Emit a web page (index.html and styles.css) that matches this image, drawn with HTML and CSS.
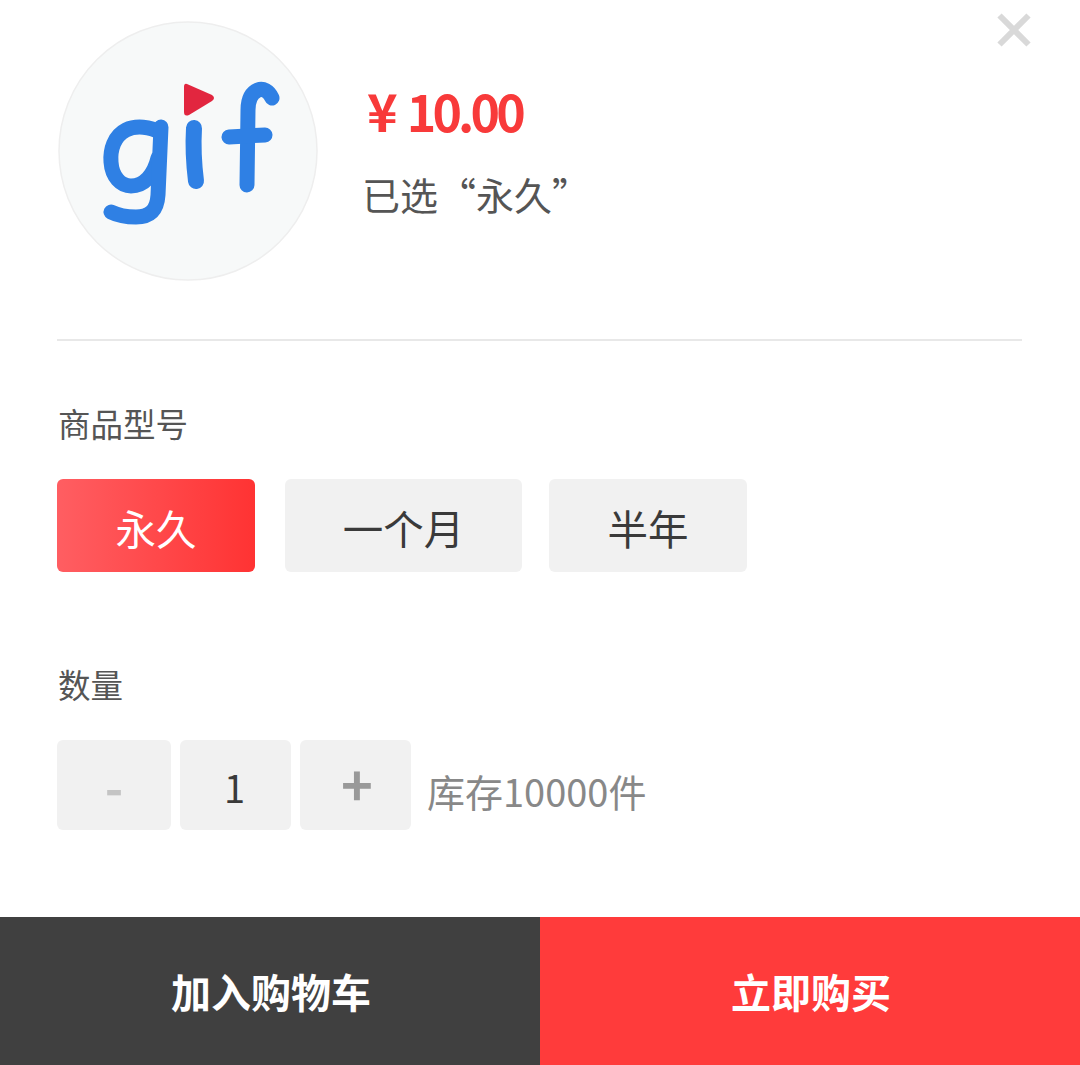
FILE: index.html
```html
<!DOCTYPE html>
<html lang="zh-CN">
<head>
  <meta charset="UTF-8">
  <meta name="viewport" content="width=device-width, initial-scale=1.0">
  <title>商品选择</title>
  <link rel="stylesheet" href="styles.css">
</head>
<body>

  <div class="sheet">
    <svg class="close" viewBox="0 0 34 34" aria-label="关闭">
      <path d="M2.5 2.5L31.5 31.5M31.5 2.5L2.5 31.5"/>
    </svg>

    <div class="summary">
      <svg class="logo" viewBox="56 20 262 262">
        <circle class="logo-disc" cx="187" cy="151" r="129"/>
        <path class="logo-play" d="M186 84L211 95Q215 98 211 101L188 115Q183 117 183 112L183 87Q183 83 186 84Z"/>
        <path class="logo-ink" d="M158 132C150 127 135 125 125 130C113 136 109 150 110 162C111 177 120 186 130 186C143 186 153 175 157 158"/>
        <path class="logo-ink" d="M160 127L157 195C156 211 148 217 135 217C125 217 116 215 110 212"/>
        <path class="logo-ink logo-i" d="M193 128C192 145 193 165 195 181"/>
        <path class="logo-ink" d="M271 98C268 91 262 88 257 90C250 93 247 100 247 110L246 185"/>
        <path class="logo-ink" d="M228 137L264 135"/>
      </svg>
      <div class="summary-text">
        <div class="price"><span class="price-unit">¥</span>10.00</div>
        <div class="picked">已选“永久”</div>
      </div>
    </div>

    <div class="section-model">
      <div class="label">商品型号</div>
      <div class="options">
        <div class="option option-on">永久</div>
        <div class="option option-month">一个月</div>
        <div class="option option-half">半年</div>
      </div>
    </div>

    <div class="section-count">
      <div class="label">数量</div>
      <div class="stepper">
        <div class="step step-minus">-</div>
        <div class="step step-num">1</div>
        <div class="step step-plus">+</div>
        <div class="stock">库存10000件</div>
      </div>
    </div>
  </div>

  <footer class="actions">
    <div class="action action-cart">加入购物车</div>
    <div class="action action-buy">立即购买</div>
  </footer>

</body>
</html>
```

FILE: styles.css
```css
* {
  box-sizing: border-box;
}

body {
  margin: 0;
  height: 1065px;
  display: flex;
  flex-direction: column;
  justify-content: space-between;
  background-color: #fff;
  color: #555;
  font-family: "Noto Sans CJK SC", "Noto Sans", sans-serif;
  overflow: hidden;
}

.sheet {
  position: relative;
  padding: 20px 58px 0 57px;
}

.close {
  position: absolute;
  top: 13px;
  right: 49px;
  width: 34px;
  height: 34px;
}

.close path {
  fill: none;
  stroke: #d9d9d9;
  stroke-width: 6;
}

/* top block */
.summary {
  display: flex;
  align-items: flex-start;
  padding-bottom: 57px;
  border-bottom: 2px solid #e8e8e8;
}

.logo {
  width: 262px;
  height: 262px;
  flex: none;
}

.logo-disc {
  fill: #f7f9f9;
  stroke: #eeeeee;
  stroke-width: 1.5;
}

.logo-play {
  fill: #e2263f;
}

.logo-ink {
  fill: none;
  stroke: #2f80e4;
  stroke-width: 15;
  stroke-linecap: round;
  stroke-linejoin: round;
}

.logo-i {
  stroke-width: 16;
}

.summary-text {
  margin-left: 43px;
  padding-top: 60px;
}

.price {
  margin-left: 5px;
  color: #f83a3a;
  font-size: 50px;
  font-weight: bold;
  line-height: 60px;
  letter-spacing: -3.8px;
}

.price-unit {
  margin-right: 9px;
  font-size: 52px;
  letter-spacing: 0;
}

.picked {
  margin-top: 29px;
  font-size: 38px;
  line-height: 50px;
}

.label {
  padding-left: 1px;
  font-size: 32.5px;
  line-height: 44px;
}

.section-model {
  padding-top: 60px;
}

.options {
  display: flex;
  margin-top: 34px;
}

.option {
  width: 198px;
  height: 93px;
  padding-top: 3px;
  border-radius: 6px;
  background-color: #f1f1f1;
  color: #3a3a3a;
  font-size: 40.5px;
  display: flex;
  align-items: center;
  justify-content: center;
}

.option-on {
  background: linear-gradient(90deg, #ff5e62, #ff3333);
  color: #fff;
}

.option-month {
  width: 237px;
  margin-left: 30px;
}

.option-half {
  margin-left: 27px;
}

.section-count {
  padding-top: 90px;
}

.stepper {
  display: flex;
  align-items: center;
  margin-top: 34px;
}

.step {
  width: 111px;
  height: 90px;
  margin-right: 9px;
  border-radius: 6px;
  background-color: #f1f1f1;
  display: flex;
  align-items: center;
  justify-content: center;
}

.step-minus {
  width: 114px;
  color: #c4c4c4;
  font-size: 50px;
  font-weight: bold;
}

.step-num {
  padding: 2px 2px 0 0;
  color: #3a3a3a;
  font-size: 38px;
}

.step-plus {
  padding: 0 0 6px 3px;
  color: #999;
  font-size: 54px;
  font-weight: bold;
}

.stock {
  margin-left: 7px;
  padding-top: 10px;
  color: #888;
  font-size: 38px;
}

/* bottom bar */
.actions {
  display: flex;
  height: 148px;
}

.action {
  width: 50%;
  padding-left: 2px;
  display: flex;
  align-items: center;
  justify-content: center;
  color: #fff;
  font-size: 40px;
  font-weight: bold;
}

.action-cart {
  background-color: #404040;
}

.action-buy {
  background-color: #ff3b3b;
}
```
